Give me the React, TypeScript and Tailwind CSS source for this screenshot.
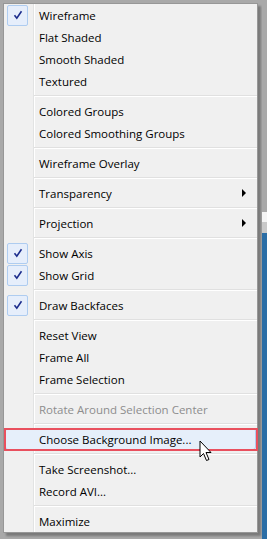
type Entry =
  | { kind: "sep" }
  | {
      kind: "item";
      label: string;
      checked?: boolean;
      disabled?: boolean;
      submenu?: boolean;
      hot?: boolean;
    };

const entries: Entry[] = [
  { kind: "item", label: "Wireframe", checked: true },
  { kind: "item", label: "Flat Shaded" },
  { kind: "item", label: "Smooth Shaded" },
  { kind: "item", label: "Textured" },
  { kind: "sep" },
  { kind: "item", label: "Colored Groups" },
  { kind: "item", label: "Colored Smoothing Groups" },
  { kind: "sep" },
  { kind: "item", label: "Wireframe Overlay" },
  { kind: "sep" },
  { kind: "item", label: "Transparency", submenu: true },
  { kind: "sep" },
  { kind: "item", label: "Projection", submenu: true },
  { kind: "sep" },
  { kind: "item", label: "Show Axis", checked: true },
  { kind: "item", label: "Show Grid", checked: true },
  { kind: "sep" },
  { kind: "item", label: "Draw Backfaces", checked: true },
  { kind: "sep" },
  { kind: "item", label: "Reset View" },
  { kind: "item", label: "Frame All" },
  { kind: "item", label: "Frame Selection" },
  { kind: "sep" },
  { kind: "item", label: "Rotate Around Selection Center", disabled: true },
  { kind: "sep" },
  { kind: "item", label: "Choose Background Image...", hot: true },
  { kind: "sep" },
  { kind: "item", label: "Take Screenshot..." },
  { kind: "item", label: "Record AVI..." },
  { kind: "sep" },
  { kind: "item", label: "Maximize" },
];

const CheckBox = () => (
  <div className="flex h-[21px] w-[21px] items-center justify-center rounded-[2px] border border-[#aeccf0] bg-[#e6eefb]">
    <svg width="10" height="10" viewBox="0 0 10 10">
      <path d="M1.5 5.2 L3.8 8.2 L8.5 1.2" fill="none" stroke="#1c2c8c" strokeWidth="1.6" />
    </svg>
  </div>
);

const Cursor = () => (
  <svg className="absolute left-[199px] top-[440px]" width="14" height="22" viewBox="0 0 14 22">
    <path
      d="M1 1 L1 17 L4.5 13.5 L7.5 20.5 L10 19.5 L7 12.5 L12 12.5 Z"
      fill="#fff"
      stroke="#000"
      strokeWidth="1"
      strokeLinejoin="round"
    />
  </svg>
);

const MenuRow = ({ e }: { e: Extract<Entry, { kind: "item" }> }) => (
  <div
    className={
      "relative flex h-[22px] items-center text-[11.5px] leading-none " +
      (e.disabled ? "text-[#8d8d8d]" : "text-black")
    }
  >
    {e.hot && (
      <>
        {/* hover highlight and the red annotation frame drawn over it */}
        <div className="absolute inset-x-[1px] inset-y-0 rounded-[3px] border border-[#b0cdf0] bg-[#e6effa]" />
        <div className="absolute -bottom-[1px] -right-[1px] left-0 top-0 border-2 border-[#e9505e]" />
      </>
    )}
    <div className="relative flex w-[30px] shrink-0 items-center pl-[3px]">
      {e.checked && <CheckBox />}
    </div>
    <span className="relative pl-[5px] pt-[1px]">{e.label}</span>
    {e.submenu && (
      <svg className="ml-auto mr-[10px]" width="5" height="8" viewBox="0 0 5 8">
        <path d="M0 0 L4 4 L0 8 Z" fill="#000" />
      </svg>
    )}
  </div>
);

export default function App() {
  return (
    <div
      className="relative flex h-[539px] w-[267px] overflow-hidden bg-[#a9a9a9]"
      style={{ fontFamily: '"Open Sans", "Noto Sans", sans-serif' }}
    >
      <div className="w-[262px] shrink-0 pl-[3px] pt-[3px]">
        <div className="w-[255px] border border-[#979797] bg-[#f0f0f0] bg-[linear-gradient(to_right,#f0f0f0_29px,#e2e3e3_29px,#e2e3e3_30px,#ffffff_30px,#ffffff_31px,#f0f0f0_31px)] shadow-[3px_3px_2px_rgba(0,0,0,0.28)]">
          {entries.map((e, i) =>
            e.kind === "sep" ? (
              <div key={i} className="flex h-[8px] items-center pl-[30px]">
                <div className="h-[2px] w-full border-t border-[#e0e0e0] bg-white" />
              </div>
            ) : (
              <MenuRow key={i} e={e} />
            )
          )}
        </div>
      </div>

      <div className="flex flex-1 flex-col">
        <div className="h-[212px] bg-[#a9a9a9]" />
        <div className="h-[10px] bg-[#f4f4f4]" />
        <div className="h-[11px] bg-[#c9c9c9]" />
        <div className="flex-1 bg-[#2b6ea6]" />
      </div>

      <Cursor />
    </div>
  );
}
